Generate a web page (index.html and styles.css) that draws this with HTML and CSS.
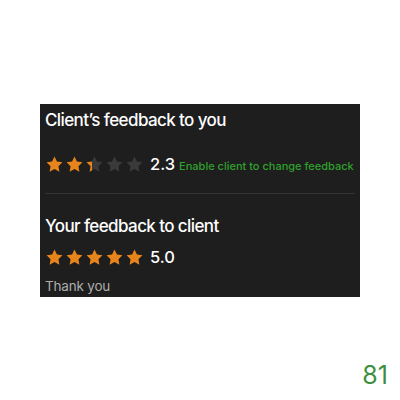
FILE: index.html
```html
<!DOCTYPE html>
<html lang="en">
  <head>
    <meta charset="UTF-8" />
    <meta name="viewport" content="width=device-width, initial-scale=1.0" />
    <title>Feedback</title>
    <link rel="stylesheet" href="styles.css">
  </head>
  <body>
    <svg width="0" height="0" class="defs">
      <defs>
        <path id="star" d="M12 2l3.09 6.26L22 9.27l-5 4.87 1.18 6.88L12 17.77l-6.18 3.25L7 14.14 2 9.27l6.91-1.01L12 2z" />
        <linearGradient id="part">
          <stop offset="32%" stop-color="#e8841c" />
          <stop offset="32%" stop-color="#3a3a3a" />
        </linearGradient>
      </defs>
    </svg>

    <div class="page">
      <div class="panel">
        <div class="section">
          <h2 class="title">Client’s feedback to you</h2>
          <div class="rating">
            <div class="stars">
              <svg viewBox="0 0 24 24" class="star on"><use href="#star" /></svg>
              <svg viewBox="0 0 24 24" class="star on"><use href="#star" /></svg>
              <svg viewBox="0 0 24 24" class="star part"><use href="#star" /></svg>
              <svg viewBox="0 0 24 24" class="star"><use href="#star" /></svg>
              <svg viewBox="0 0 24 24" class="star"><use href="#star" /></svg>
            </div>
            <span class="score">2.3</span>
            <a class="link">Enable client to change feedback</a>
          </div>
        </div>

        <div class="section second">
          <h2 class="title">Your feedback to client</h2>
          <div class="rating">
            <div class="stars">
              <svg viewBox="0 0 24 24" class="star on"><use href="#star" /></svg>
              <svg viewBox="0 0 24 24" class="star on"><use href="#star" /></svg>
              <svg viewBox="0 0 24 24" class="star on"><use href="#star" /></svg>
              <svg viewBox="0 0 24 24" class="star on"><use href="#star" /></svg>
              <svg viewBox="0 0 24 24" class="star on"><use href="#star" /></svg>
            </div>
            <span class="score">5.0</span>
          </div>
          <p class="comment">Thank you</p>
        </div>
      </div>

      <div class="footer">
        <span class="count">81</span>
      </div>
    </div>
  </body>
</html>
```

FILE: styles.css
```css
body {
  font-family: Inter, "Liberation Sans", Arial, sans-serif;
  background-color: #fff;
  margin: 0;
}
.defs {
  position: absolute;
}
.page {
  padding: 104px 0 0 40px;
  width: 400px;
  box-sizing: border-box;
}
.panel {
  width: 320px;
  height: 193px;
  background: #1e1e1e;
  box-sizing: border-box;
  padding: 0 5px;
}
.section {
  padding-top: 6px;
  height: 90px;
  box-sizing: border-box;
  border-bottom: 1px solid #333;
}
.section.second {
  border-bottom: none;
  padding-top: 22px;
  height: auto;
}
.title {
  margin: 0;
  color: #fff;
  font-size: 17px;
  font-weight: 500;
  letter-spacing: -0.6px;
  line-height: 20px;
}
.rating {
  display: flex;
  align-items: center;
  margin-top: 24px;
}
.second .rating {
  margin-top: 11px;
}
.stars {
  display: flex;
  gap: 1px;
}
.star {
  width: 19px;
  height: 19px;
  fill: #3a3a3a;
}
.star.on {
  fill: #e8841c;
}
.star.part {
  fill: url(#part);
}
.score {
  color: #fff;
  font-size: 16.5px;
  font-weight: 500;
  margin-left: 6px;
}
.link {
  color: #2fa12c;
  font-size: 11px;
  font-weight: 500;
  margin-left: 4px;
  margin-top: 4px;
}
.comment {
  margin: 11px 0 0;
  color: #adadad;
  font-size: 13.5px;
  letter-spacing: -0.2px;
}
.footer {
  display: flex;
  justify-content: flex-end;
  padding-right: 12px;
  margin-top: 64px;
}
.count {
  color: #3c8f3c;
  font-size: 25px;
  line-height: 28px;
}
```
